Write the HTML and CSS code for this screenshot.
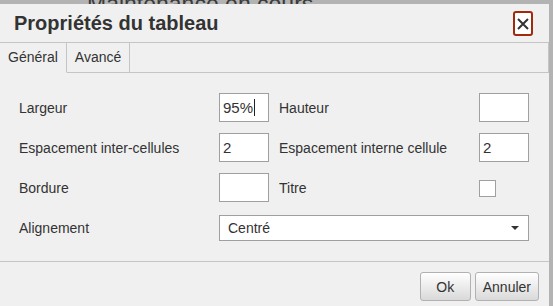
FILE: index.html
```html
<!DOCTYPE html>
<html lang="fr">
<head>
  <meta charset="UTF-8">
  <title>Propriétés du tableau</title>
  <link rel="stylesheet" href="styles.css">
</head>
<body>
  <div class="page">
    <div class="notice"><h1>Maintenance en cours</h1></div>

    <div class="dialog">
      <div class="dialog-head">
        <span class="title">Propriétés du tableau</span>
        <button class="close" aria-label="Fermer">
          <svg width="12" height="12" viewBox="0 0 12 12">
            <path d="M1 1 L11 11 M11 1 L1 11" stroke="#333" stroke-width="2" fill="none"/>
          </svg>
        </button>
      </div>

      <div class="tabs">
        <div class="tab active">Général</div>
        <div class="tab">Avancé</div>
        <div class="tab-fill"></div>
      </div>

      <div class="form">
        <label class="lbl">Largeur</label>
        <div class="field">95%<span class="cursor"></span></div>
        <label class="lbl right">Hauteur</label>
        <div class="field"></div>

        <label class="lbl">Espacement inter-cellules</label>
        <div class="field">2</div>
        <label class="lbl right">Espacement interne cellule</label>
        <div class="field">2</div>

        <label class="lbl">Bordure</label>
        <div class="field"></div>
        <label class="lbl right">Titre</label>
        <span class="check"></span>

        <label class="lbl">Alignement</label>
        <div class="select">
          <span>Centré</span>
          <span class="caret"></span>
        </div>
      </div>

      <div class="dialog-foot">
        <button class="btn">Ok</button>
        <button class="btn">Annuler</button>
      </div>
    </div>
  </div>
</body>
</html>
```

FILE: styles.css
```css
* {
  margin: 0;
  padding: 0;
  box-sizing: border-box;
}

html, body {
  height: 306px;
  overflow: hidden;
}

body {
  font-family: "Liberation Sans", Arial, sans-serif;
  background-color: #b3b3b3;
  color: #333;
}

.page {
  position: relative;
  height: 306px;
  overflow: hidden;
}

/* page text behind the dialog, only its upper edge shows */
.notice {
  height: 4px;
  overflow: hidden;
}

.notice h1 {
  margin-top: -9px;
  padding-left: 87px;
  font-size: 23px;
  font-weight: normal;
  line-height: 26px;
  color: #3a3a3a;
  white-space: nowrap;
}

.dialog {
  position: absolute;
  top: 4px;
  left: 0;
  bottom: 0;
  width: 549px;
  background-color: #f0f0f0;
}

.dialog-head {
  display: flex;
  justify-content: space-between;
  align-items: center;
  height: 39px;
  padding: 0 16px 0 14px;
  border-bottom: 1px solid #c5c5c5;
}

.title {
  font-size: 20px;
  font-weight: bold;
  color: #333;
}

.close {
  width: 20px;
  height: 25px;
  margin-top: 1px;
  background-color: #fff;
  border: 2px solid #a12a0c;
  border-radius: 3px;
  display: flex;
  align-items: center;
  justify-content: center;
}

.tabs {
  display: flex;
  height: 30px;
}

.tab {
  padding: 0 8px;
  line-height: 29px;
  font-size: 14px;
  border-right: 1px solid #c5c5c5;
  border-bottom: 1px solid #c5c5c5;
}

.tab.active {
  border-bottom-color: transparent;
}

.tab-fill {
  flex: 1;
  border-right: 1px solid #c5c5c5;
  border-bottom: 1px solid #c5c5c5;
}

.form {
  display: grid;
  grid-template-columns: 200px 50px 210px 50px;
  grid-auto-rows: 29px;
  row-gap: 11px;
  align-items: center;
  padding: 20px 19px 19px;
  border-bottom: 1px solid #c5c5c5;
}

.lbl {
  font-size: 14px;
  color: #333;
}

.lbl.right {
  padding-left: 10px;
}

.field {
  width: 50px;
  height: 29px;
  display: flex;
  align-items: center;
  border: 1px solid #a0a0a0;
  background-color: #fff;
  padding: 0 3px;
  font-size: 15px;
  color: #333;
}

.cursor {
  width: 1px;
  height: 17px;
  margin-left: 1px;
  background-color: #222;
}

.check {
  width: 17px;
  height: 17px;
  margin-top: 2px;
  border: 1px solid #a0a0a0;
  background-color: #fff;
}

.select {
  grid-column: 2 / 5;
  height: 26px;
  display: flex;
  justify-content: space-between;
  align-items: center;
  padding: 0 9px 0 8px;
  border: 1px solid #a0a0a0;
  background-color: #fff;
  font-size: 14px;
}

.caret {
  width: 0;
  height: 0;
  border-left: 4px solid transparent;
  border-right: 4px solid transparent;
  border-top: 4px solid #333;
}

.dialog-foot {
  display: flex;
  justify-content: flex-end;
  gap: 4px;
  padding: 10px 10px 0;
}

.btn {
  height: 29px;
  padding: 0 7px;
  min-width: 51px;
  font-family: "Liberation Sans", Arial, sans-serif;
  font-size: 14px;
  color: #333;
  border: 1px solid #b1b1b1;
  border-radius: 3px;
  background: linear-gradient(#ffffff, #d9d9d9);
}
```
